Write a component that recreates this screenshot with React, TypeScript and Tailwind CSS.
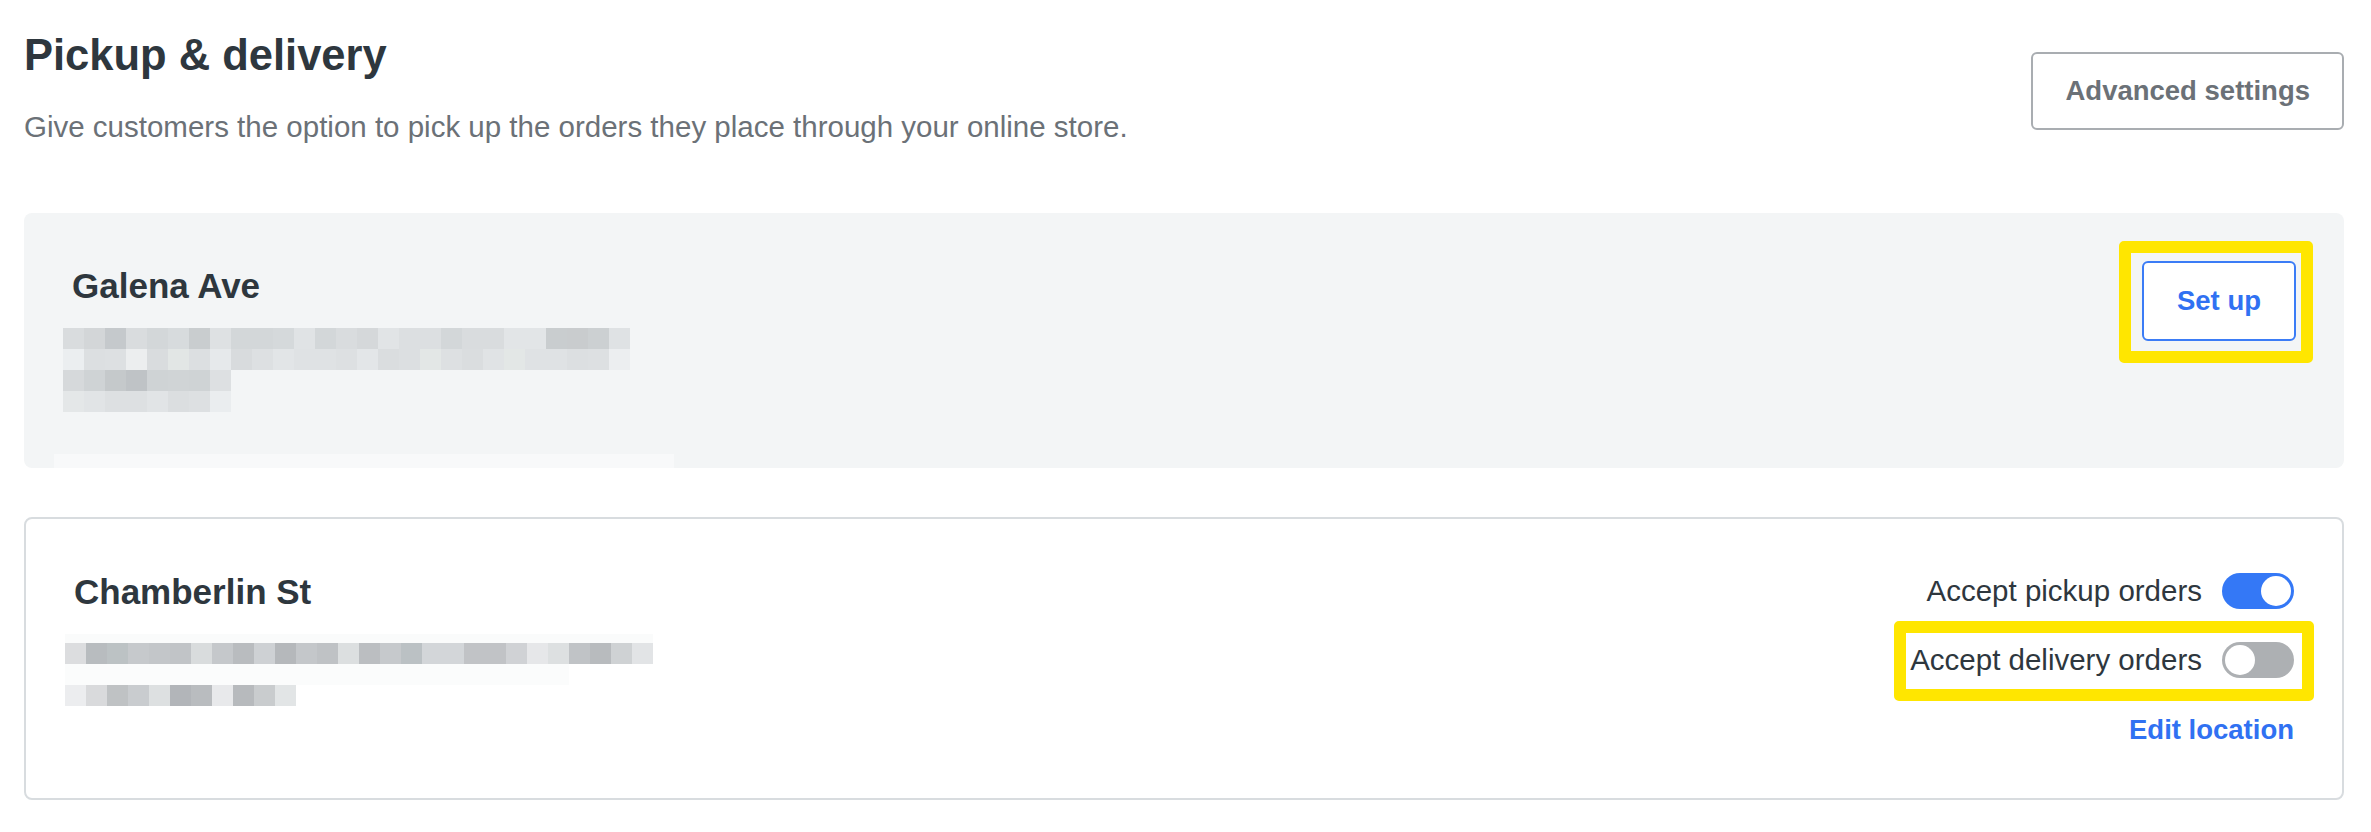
import React from "react";

const g1 = ["#d9dcde","#d3d6d8","#c5c9cc","#d9dcde","#d3d7d9","#d7dbdd","#c9cdcf","#dee1e3","#d3d7d9","#d3d7d9","#d5d9db","#e0e3e5","#d3d7d9","#d9dcde","#d5d8da","#e1e4e6","#dcdfe1","#dcdfe1","#d3d7d9","#d9dcde","#d9dcde","#e2e5e7","#e2e5e7","#c9cdcf","#c9ccce","#ccd0d2","#dfe2e4"];
const g2 = ["#ebeef0","#dcdfe1","#dde0e2","#eceeef","#d9dcde","#e2e6e5","#dcdfe1","#e6e9eb","#d8dbdd","#dde0e2","#e2e5e7","#dfe2e4","#dfe2e4","#dde0e2","#e3e6e8","#dadddf","#dcdfe1","#e3e7e6","#dde0e2","#dadddf","#e0e3e5","#e3e7e6","#dfe2e4","#dfe2e4","#dcdfe1","#dde0e2","#eceef0"];
const g3 = ["#d6d9db","#cfd3d5","#c5c9cb","#bfc3c6","#cfd3d5","#d0d4d6","#cfd3d5","#dde0e2"];
const g4 = ["#e4e7e8","#e1e4e6","#dde0e2","#dde0e2","#e1e4e6","#dbdee0","#dde0e2","#eaedef"];

const c1 = ["#dcdddf","#b8bcbf","#bcc2c4","#c6c9cc","#c3c6c9","#c1c4c7","#d9dcdd","#c5c8cb","#b9bcbf","#ced1d4","#b5b8bb","#c4c7ca","#bfc2c5","#dcdfe0","#bbbec1","#c6c9cc","#bbc1c4","#d3d6d9","#d3d6d9","#c1c3c6","#c1c3c6","#d0d2d5","#e6e7e9","#dde0e1","#c0c3c6","#b8bbbe","#cfd2d4","#e2e4e6"];
const c2 = ["#ecedef","#d9dadc","#bfc2c4","#c9cccf","#dde0e1","#b2b5b9","#b9bcbf","#e8e9eb","#b7babd","#c9ccce","#e2e5e6"];

function Pixels({ colors, h = 21 }: { colors: string[]; h?: number }) {
  return (
    <div className="flex">
      {colors.map((c, i) => (
        <div key={i} className="w-[21px]" style={{ backgroundColor: c, height: h }} />
      ))}
    </div>
  );
}

function Toggle({ on }: { on: boolean }) {
  return (
    <div
      className={
        "flex h-[36px] w-[72px] shrink-0 items-center rounded-full p-[3px] " +
        (on ? "justify-end bg-[#3478f6]" : "justify-start bg-[#adb0b3]")
      }
    >
      <div className="h-[30px] w-[30px] rounded-full bg-white" />
    </div>
  );
}

export default function App() {
  return (
    <div
      className="min-h-screen w-full bg-white pl-[24px] pr-[27px] pt-[29px]"
      style={{ fontFamily: '"Liberation Sans", Arial, sans-serif' }}
    >
      {/* Header */}
      <div className="flex items-start justify-between">
        <div>
          <h1 className="text-[43.5px] font-bold leading-[52px] text-[#2e373e]">Pickup &amp; delivery</h1>
          <p className="mt-[26px] text-[29.5px] leading-[40px] text-[#6b7177]">
            Give customers the option to pick up the orders they place through your online store.
          </p>
        </div>
        <button className="mt-[23px] flex h-[78px] items-center rounded-[6px] border-2 border-[#a9adb1] bg-white px-[32px] text-[27.5px] font-bold text-[#6b7177]">
          Advanced settings
        </button>
      </div>

      {/* Galena Ave card */}
      <div className="mt-[66px] rounded-[8px] bg-[#f3f5f6] px-[48px] pt-[48px]">
        <div className="flex items-start justify-between">
          <div>
            <div className="text-[35px] font-bold leading-[50px] text-[#2e373e]">Galena Ave</div>
            <div className="-ml-[9px] mt-[17px]">
              <Pixels colors={g1} />
              <Pixels colors={g2} />
              <Pixels colors={g3} />
              <Pixels colors={g4} />
            </div>
          </div>
          <div className="relative">
            <button className="flex h-[80px] items-center rounded-[6px] border-2 border-[#3b7cf6] bg-white px-[33px] text-[27.5px] font-bold text-[#3071f2]">
              Set up
            </button>
            <div className="pointer-events-none absolute -bottom-[22px] -left-[23px] -right-[17px] -top-[20px] rounded-[5px] border-[12px] border-[#ffe600]" />
          </div>
        </div>
        <div className="-ml-[18px] mt-[42px] h-[14px] w-[620px] bg-[#f8f9fa]" />
      </div>

      {/* Chamberlin St card */}
      <div className="mt-[49px] flex items-start justify-between rounded-[8px] border-2 border-[#d8dcdf] bg-white px-[48px] pb-[50px] pt-[48px]">
        <div>
          <div className="text-[35px] font-bold leading-[50px] text-[#2e373e]">Chamberlin St</div>
          <div className="-ml-[9px] mt-[17px]">
            <Pixels colors={c1.map(() => "#fafbfb")} h={9} />
            <Pixels colors={c1} />
            <Pixels colors={c1.slice(0, 24).map(() => "#fbfcfc")} />
            <Pixels colors={c2} />
          </div>
        </div>
        <div className="flex flex-col items-end">
          <div className="flex h-[48px] items-center gap-[20px]">
            <span className="text-[29.5px] leading-[48px] text-[#2e373e]">Accept pickup orders</span>
            <Toggle on />
          </div>
          <div className="relative mt-[20.5px] flex h-[48px] items-center gap-[20px]">
            <span className="text-[29.5px] leading-[48px] text-[#2e373e]">Accept delivery orders</span>
            <Toggle on={false} />
            <div className="pointer-events-none absolute -bottom-[17.5px] -left-[16px] -right-[20px] -top-[14.5px] rounded-[5px] border-[12px] border-[#ffe600]" />
          </div>
          <a className="mt-[28px] text-[27.5px] font-bold leading-[36px] text-[#3071f2]">Edit location</a>
        </div>
      </div>
    </div>
  );
}
